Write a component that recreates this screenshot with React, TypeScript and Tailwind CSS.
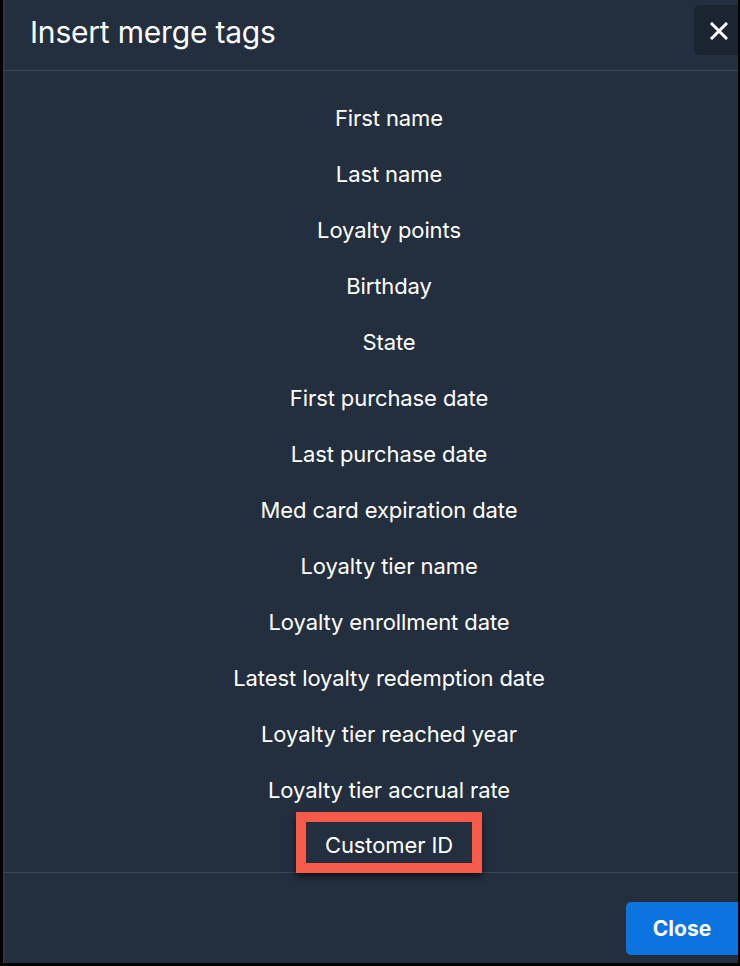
import React from "react";

const items = [
  "First name",
  "Last name",
  "Loyalty points",
  "Birthday",
  "State",
  "First purchase date",
  "Last purchase date",
  "Med card expiration date",
  "Loyalty tier name",
  "Loyalty enrollment date",
  "Latest loyalty redemption date",
  "Loyalty tier reached year",
  "Loyalty tier accrual rate",
];

export default function App() {
  return (
    <div
      className="w-[740px] h-[966px] bg-black flex overflow-hidden"
      style={{ fontFamily: "Inter, 'Noto Sans', sans-serif" }}
    >
      <div className="ml-[3px] mr-[2px] mb-[3px] flex-1 bg-[#232f3e] flex flex-col text-white border-l border-[#3a3f46]">
        <div className="h-[71px] border-b border-[#3b4757] flex items-start justify-between pl-[26px]">
          <h1 className="text-[30px] leading-none mt-[17px] tracking-[-0.2px]">Insert merge tags</h1>
          <button className="mt-[5px] w-[44px] h-[50px] bg-[#1b2431] rounded-l-[6px] flex items-center justify-center">
            <svg width="18" height="18" viewBox="0 0 18 18" className="ml-[5px] mt-[2px]">
              <path d="M2 2 L16 16 M16 2 L2 16" stroke="white" strokeWidth="3" strokeLinecap="square" />
            </svg>
          </button>
        </div>
        <div className="pt-[19px] pl-[36px] flex flex-col items-center">
          {items.map((t) => (
            <div key={t} className="h-[56px] flex items-center justify-center text-[22px] tracking-[-0.1px]">
              {t}
            </div>
          ))}
          <div className="h-[54px] flex items-start justify-center text-[22px] tracking-[-0.1px] relative z-10">
            <span className="-mt-[6px] h-[61px] px-[19px] pt-[6px] border-[10px] border-[#f65b4a] flex items-center bg-[#232f3e] shadow-[0_4px_6px_rgba(0,0,0,0.55)]">
              Customer ID
            </span>
          </div>
        </div>
        <div className="border-t border-[#3b4757] flex-1 flex justify-end items-start pt-[29px]">
          <button className="w-[112px] h-[53px] bg-[#0b74de] rounded-l-[5px] text-[21px] font-bold text-white">
            Close
          </button>
        </div>
      </div>
    </div>
  );
}
